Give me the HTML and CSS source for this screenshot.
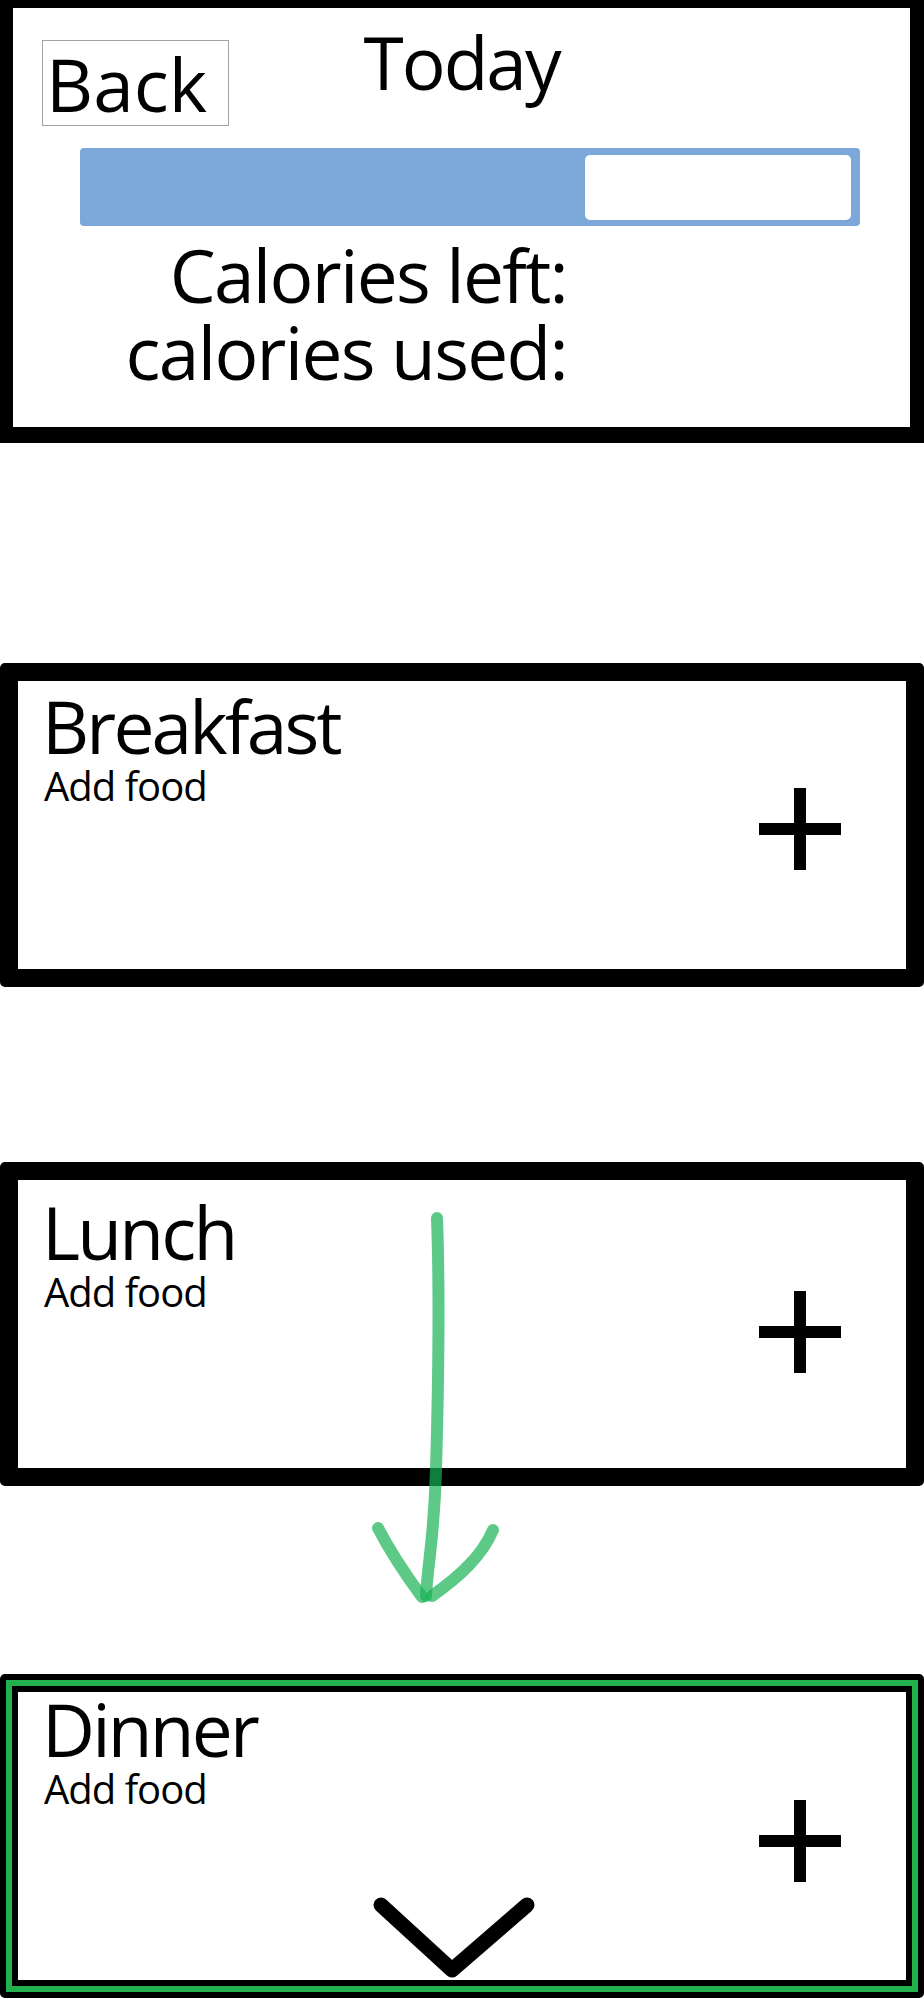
FILE: index.html
```html
<!DOCTYPE html>
<html lang="en">
<head>
    <meta charset="UTF-8">
    <meta name="viewport" content="width=device-width, initial-scale=1.0">
    <title>Today</title>
    <link rel="stylesheet" href="styles.css">
</head>
<body>
    <div class="page">
        <div class="summary">
            <div class="summary-top">
                <button class="back">Back</button>
                <h1 class="day">Today</h1>
            </div>
            <div class="progress">
                <div class="progress-left"></div>
            </div>
            <div class="totals">
                <div>Calories left:</div>
                <div>calories used:</div>
            </div>
        </div>

        <div class="meal meal-breakfast">
            <div class="meal-text">
                <h2 class="meal-name">Breakfast</h2>
                <div class="meal-add">Add food</div>
            </div>
            <svg class="plus" width="82" height="82" viewBox="0 0 82 82">
                <path d="M41 0 V82 M0 41 H82" stroke="#000" stroke-width="12" fill="none"/>
            </svg>
        </div>

        <div class="meal meal-lunch">
            <div class="meal-text">
                <h2 class="meal-name">Lunch</h2>
                <div class="meal-add">Add food</div>
            </div>
            <svg class="plus" width="82" height="82" viewBox="0 0 82 82">
                <path d="M41 0 V82 M0 41 H82" stroke="#000" stroke-width="12" fill="none"/>
            </svg>
        </div>

        <div class="meal meal-dinner selected">
            <div class="meal-text">
                <h2 class="meal-name">Dinner</h2>
                <div class="meal-add">Add food</div>
            </div>
            <svg class="plus" width="82" height="82" viewBox="0 0 82 82">
                <path d="M41 0 V82 M0 41 H82" stroke="#000" stroke-width="12" fill="none"/>
            </svg>
            <!-- expand -->
            <svg class="chevron" width="170" height="85" viewBox="0 0 170 85">
                <path d="M11 10 L82 75 L157 10" stroke="#000" stroke-width="15" stroke-linecap="round" stroke-linejoin="round" fill="none"/>
            </svg>
        </div>

        <!-- drag hint: lunch moves down to dinner -->
        <svg class="drag-arrow" width="160" height="410" viewBox="360 1200 160 410">
            <g stroke="rgb(24,178,84)" stroke-opacity="0.7" stroke-width="12" stroke-linecap="round" fill="none">
                <path d="M437 1218 C440 1300 438 1400 436 1470 S428 1560 426 1596"/>
                <path d="M378 1528 C392 1555 408 1578 422 1597"/>
                <path d="M493 1530 C482 1556 460 1576 432 1596"/>
            </g>
        </svg>
    </div>
</body>
</html>
```

FILE: styles.css
```css
body {
    margin: 0;
    font-family: "Open Sans", "Noto Sans", sans-serif;
    color: #000;
    background-color: #fff;
}

.page {
    position: relative;
    width: 924px;
}

.summary {
    box-sizing: border-box;
    height: 443px;
    border: 14px solid #000;
    border-top-width: 8px;
    border-bottom-width: 16px;
    border-left-width: 13px;
}

.summary-top {
    display: grid;
    grid-template-columns: 1fr auto 1fr;
    align-items: start;
}

.back {
    box-sizing: border-box;
    width: 187px;
    height: 86px;
    margin: 32px 0 0 29px;
    padding: 0 0 0 3px;
    border: 1px solid #a3a3a3;
    border-radius: 0;
    background-color: #fff;
    font-family: inherit;
    font-size: 73px;
    line-height: 1;
    text-align: left;
    color: #000;
}

.day {
    margin: 17px 0 0;
    font-size: 73px;
    font-weight: 400;
    line-height: 1;
    letter-spacing: -2px;
}

.progress {
    display: flex;
    justify-content: flex-end;
    height: 78px;
    box-sizing: border-box;
    width: 780px;
    margin: 22px 0 0 67px;
    padding: 7px 9px 6px;
    border-radius: 4px;
    background-color: #7ba7d9;
}

.progress-left {
    width: 266px;
    border-radius: 5px;
    background-color: #fff;
}

.totals {
    width: 554px;
    margin-top: 10px;
    font-size: 73px;
    line-height: 77px;
    letter-spacing: -1.7px;
    text-align: right;
}

.meal {
    position: relative;
    box-sizing: border-box;
    height: 324px;
    display: flex;
    justify-content: space-between;
    align-items: flex-start;
    padding: 8px 0 0 24px;
    border: 18px solid #000;
    border-radius: 5px;
}

.meal-breakfast {
    margin-top: 220px;
}

.meal-lunch {
    margin-top: 175px;
    padding-top: 15px;
}

.meal-dinner {
    margin-top: 188px;
    padding-top: 0;
}

.meal.selected {
    outline: 6px solid #22b14c;
    outline-offset: -12px;
}

.meal-name {
    margin: 0;
    font-size: 73px;
    font-weight: 400;
    line-height: 1;
    letter-spacing: -2.8px;
}

.meal-add {
    margin: 4px 0 0 2px;
    font-size: 40px;
    line-height: 1;
    letter-spacing: -1px;
}

.plus {
    align-self: center;
    margin-right: 65px;
    flex-shrink: 0;
}

.meal-dinner .plus {
    margin-top: 9px;
}

.chevron {
    position: absolute;
    left: 352px;
    top: 203px;
}

.drag-arrow {
    position: absolute;
    left: 360px;
    top: 1200px;
    pointer-events: none;
}
```
